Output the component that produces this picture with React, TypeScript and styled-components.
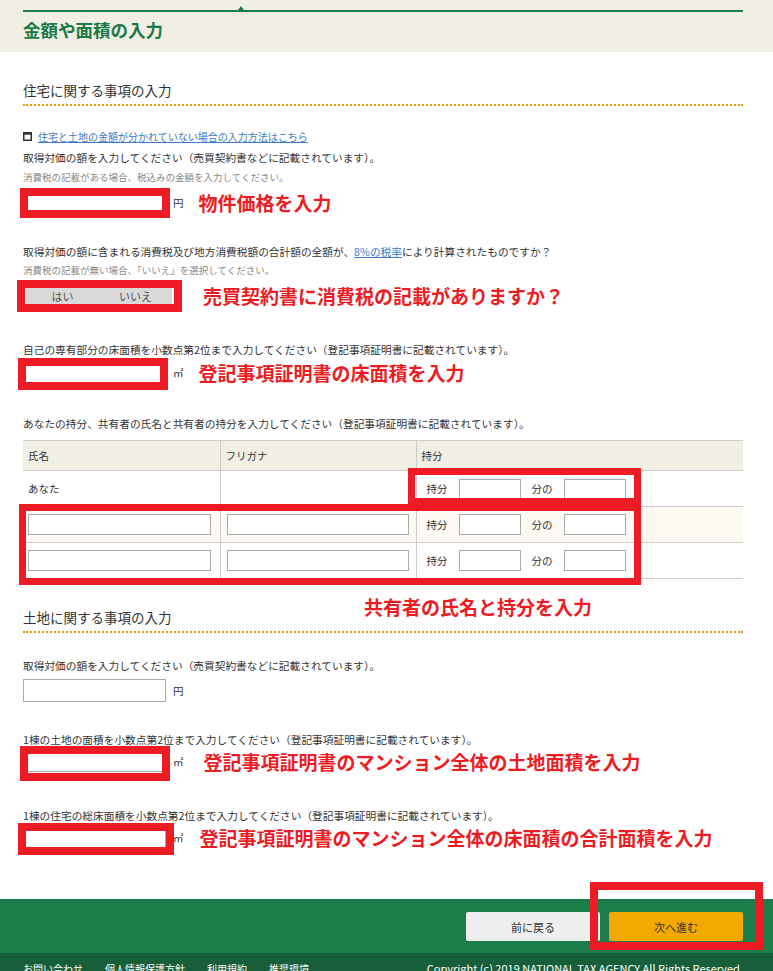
import React from 'react'
import styled, { createGlobalStyle } from 'styled-components'

const font = '"Noto Sans CJK JP", "Noto Sans", sans-serif'
const red = '#ed1c24'
const green = '#1b7d49'

const GlobalStyle = createGlobalStyle`
  body {
    margin: 0;
    background: #fff;
    font-family: ${font};
    color: #333;
  }
  * { box-sizing: border-box; }
`

const Header = styled.header`
  background: #f1eee3;
  height: 52px;
  padding: 10px 30px 0 23px;
`
const HeaderRule = styled.div`
  position: relative;
  height: 2px;
  background: ${green};
  &::before {
    content: '';
    position: absolute;
    left: 215px;
    top: -4px;
    border-left: 3px solid transparent;
    border-right: 3px solid transparent;
    border-bottom: 4px solid ${green};
  }
`
const PageTitle = styled.h1`
  margin: 5px 0 0;
  font-size: 17.5px;
  line-height: 26px;
  font-weight: 700;
  color: #1a7a47;
`

const Content = styled.main`
  padding: 0 30px 0 23px;
`
const SectionHeading = styled.h2<{ $mt: number }>`
  position: relative;
  margin: ${p => p.$mt}px 0 0;
  font-size: 13.5px;
  line-height: 20px;
  font-weight: 400;
  color: #333;
  padding-bottom: 4px;
  border-bottom: 2px dotted #e89a00;
`
const Line = styled.p<{ $mt: number }>`
  margin: ${p => p.$mt}px 0 0;
  font-size: 10.7px;
  line-height: 16px;
  color: #333;
  white-space: nowrap;
`
const SubNote = styled.p<{ $mt: number }>`
  margin: ${p => p.$mt}px 0 0;
  font-size: 9.5px;
  line-height: 14px;
  color: #888;
`
const GuideLink = styled.div<{ $mt: number }>`
  display: flex;
  align-items: center;
  gap: 6px;
  margin-top: ${p => p.$mt}px;
  height: 16px;
`
const Anchor = styled.a`
  color: #3b7bc8;
  text-decoration: underline;
  font-size: 10px;
  cursor: pointer;
`
const InlineAnchor = styled.a`
  color: #3b7bc8;
  text-decoration: underline;
`

const FieldRow = styled.div<{ $mt: number; $h?: number }>`
  position: relative;
  display: flex;
  align-items: center;
  margin-top: ${p => p.$mt}px;
  height: ${p => p.$h ?? 22}px;
`
const TextInput = styled.input<{ $w: number; $h?: number }>`
  width: ${p => p.$w}px;
  height: ${p => p.$h ?? 22}px;
  margin: 0;
  padding: 0 4px;
  border: 1px solid #aaa;
  background: #fff;
  font-family: ${font};
  font-size: 11px;
`
const Unit = styled.span`
  margin-left: 7px;
  font-size: 10.5px;
  color: #333;
`
const Callout = styled.span<{ $ml: number }>`
  margin-left: ${p => p.$ml}px;
  color: ${red};
  font-weight: 700;
  font-size: 19px;
  line-height: 1;
  white-space: nowrap;
`
const FloatingCallout = styled.span`
  position: absolute;
  left: 341px;
  top: -10px;
  color: ${red};
  font-weight: 700;
  font-size: 19px;
  line-height: 1;
  white-space: nowrap;
`
const Frame = styled.span<{ $x: number; $y: number; $w: number; $h: number; $b?: number }>`
  position: absolute;
  left: ${p => p.$x}px;
  top: ${p => p.$y}px;
  width: ${p => p.$w}px;
  height: ${p => p.$h}px;
  border: ${p => p.$b ?? 8}px solid ${red};
  pointer-events: none;
`

const Toggle = styled.div`
  display: flex;
  width: 146px;
  height: 17px;
  margin-left: 3px;
  background: #d9d9d9;
`
const ToggleOption = styled.button`
  flex: 1;
  border: 0;
  padding: 0;
  background: transparent;
  font-family: ${font};
  font-size: 11px;
  color: #555;
`

const TableWrap = styled.div`
  position: relative;
  margin-top: 8px;
`
const Table = styled.table`
  width: 720px;
  border-collapse: collapse;
  table-layout: fixed;
  border-top: 1px solid #ccc;
  font-size: 10.5px;
`
const Th = styled.th<{ $w?: number }>`
  width: ${p => (p.$w ? `${p.$w}px` : 'auto')};
  height: 30px;
  padding: 0 5px;
  background: #f1eee3;
  text-align: left;
  font-weight: 400;
  color: #333;
  border-bottom: 1px solid #ccc;
  border-left: 1px solid #ccc;
  &:first-child { border-left: 0; }
`
const Tr = styled.tr<{ $alt?: boolean }>`
  background: ${p => (p.$alt ? '#fcfaf3' : '#fff')};
`
const Td = styled.td`
  height: 36px;
  padding: 0 6px;
  color: #333;
  border-bottom: 1px solid #ccc;
  border-left: 1px solid #ccc;
  vertical-align: middle;
  &:first-child { border-left: 0; padding-left: 5px; }
`
const ShareBox = styled.div`
  display: flex;
  align-items: center;
  gap: 11px;
  padding-left: 4px;
`

const Footer = styled.footer`
  margin-top: 51px;
`
const ActionBar = styled.div`
  position: relative;
  display: flex;
  justify-content: flex-end;
  gap: 9px;
  height: 54px;
  padding: 13px 30px 0 0;
  background: #1b7e4a;
`
const NavButton = styled.button<{ $primary?: boolean }>`
  width: 134px;
  height: 29px;
  border: 0;
  border-radius: 2px;
  background: ${p => (p.$primary ? '#f3a900' : '#eeeeee')};
  color: #333;
  font-family: ${font};
  font-size: 11px;
`
const BottomBar = styled.div`
  display: flex;
  align-items: center;
  gap: 22px;
  height: 30px;
  padding: 0 30px 0 23px;
  background: #175f3a;
  color: #fff;
  font-size: 10px;
`
const BottomLink = styled.span`
  white-space: nowrap;
`
const Copyright = styled.span`
  margin-left: auto;
  font-size: 11px;
  white-space: nowrap;
`

const WindowIcon = () => (
  <svg width="9" height="9" viewBox="0 0 9 9">
    <rect x="0.75" y="0.75" width="7.5" height="7.5" fill="#fff" stroke="#333" strokeWidth="1.5" />
    <rect x="0.75" y="0.75" width="7.5" height="2" fill="#333" />
  </svg>
)

const coOwners = [0, 1]

const App: React.FC = () => (
  <>
    <GlobalStyle />
    <Header>
      <HeaderRule />
      <PageTitle>金額や面積の入力</PageTitle>
    </Header>

    <Content>
      <SectionHeading $mt={28}>住宅に関する事項の入力</SectionHeading>

      <GuideLink $mt={22}>
        <WindowIcon />
        <Anchor>住宅と土地の金額が分かれていない場合の入力方法はこちら</Anchor>
      </GuideLink>
      <Line $mt={6}>取得対価の額を入力してください（売買契約書などに記載されています）。</Line>
      <SubNote $mt={4}>消費税の記載がある場合、税込みの金額を入力してください。</SubNote>
      <FieldRow $mt={7}>
        <TextInput $w={143} />
        <Unit>円</Unit>
        <Callout $ml={15}>物件価格を入力</Callout>
        <Frame $x={-3} $y={-3} $w={150} $h={30} />
      </FieldRow>

      <Line $mt={31}>
        取得対価の額に含まれる消費税及び地方消費税額の合計額の全額が、<InlineAnchor>8%の税率</InlineAnchor>により計算されたものですか？
      </Line>
      <SubNote $mt={3}>消費税の記載が無い場合、「いいえ」を選択してください。</SubNote>
      <FieldRow $mt={10} $h={17}>
        <Toggle>
          <ToggleOption>はい</ToggleOption>
          <ToggleOption>いいえ</ToggleOption>
        </Toggle>
        <Callout $ml={31}>売買契約書に消費税の記載がありますか？</Callout>
        <Frame $x={-6} $y={-7} $w={165} $h={32} />
      </FieldRow>

      <Line $mt={38}>自己の専有部分の床面積を小数点第2位まで入力してください（登記事項証明書に記載されています）。</Line>
      <FieldRow $mt={3}>
        <TextInput $w={143} />
        <Unit>㎡</Unit>
        <Callout $ml={15}>登記事項証明書の床面積を入力</Callout>
        <Frame $x={-5} $y={-3} $w={150} $h={32} />
      </FieldRow>

      <Line $mt={33}>あなたの持分、共有者の氏名と共有者の持分を入力してください（登記事項証明書に記載されています）。</Line>
      <TableWrap>
        <Table>
          <thead>
            <tr>
              <Th $w={197}>氏名</Th>
              <Th $w={196}>フリガナ</Th>
              <Th>持分</Th>
            </tr>
          </thead>
          <tbody>
            <Tr>
              <Td>あなた</Td>
              <Td />
              <Td>
                <ShareBox>
                  持分 <TextInput $w={62} $h={20} /> 分の <TextInput $w={62} $h={20} />
                </ShareBox>
              </Td>
            </Tr>
            {coOwners.map(i => (
              <Tr key={i} $alt={i === 0}>
                <Td>
                  <TextInput $w={183} $h={21} />
                </Td>
                <Td>
                  <TextInput $w={182} $h={21} />
                </Td>
                <Td>
                  <ShareBox>
                    持分 <TextInput $w={62} $h={21} /> 分の <TextInput $w={62} $h={21} />
                  </ShareBox>
                </Td>
              </Tr>
            ))}
          </tbody>
        </Table>
        <Frame $x={385} $y={28} $w={233} $h={37} $b={7} />
        <Frame $x={-4} $y={64} $w={622} $h={81} $b={7} />
      </TableWrap>

      <SectionHeading $mt={28}>
        土地に関する事項の入力
        <FloatingCallout>共有者の氏名と持分を入力</FloatingCallout>
      </SectionHeading>

      <Line $mt={25}>取得対価の額を入力してください（売買契約書などに記載されています）。</Line>
      <FieldRow $mt={5} $h={23}>
        <TextInput $w={143} $h={23} />
        <Unit>円</Unit>
      </FieldRow>

      <Line $mt={30}>1棟の土地の面積を小数点第2位まで入力してください（登記事項証明書に記載されています）。</Line>
      <FieldRow $mt={2}>
        <TextInput $w={143} />
        <Unit>㎡</Unit>
        <Callout $ml={20}>登記事項証明書のマンション全体の土地面積を入力</Callout>
        <Frame $x={-3} $y={-4} $w={150} $h={35} />
      </FieldRow>

      <Line $mt={36}>1棟の住宅の総床面積を小数点第2位まで入力してください（登記事項証明書に記載されています）。</Line>
      <FieldRow $mt={2}>
        <TextInput $w={143} />
        <Unit>㎡</Unit>
        <Callout $ml={16}>登記事項証明書のマンション全体の床面積の合計面積を入力</Callout>
        <Frame $x={-5} $y={-3} $w={156} $h={32} />
      </FieldRow>
    </Content>

    <Footer>
      <ActionBar>
        <NavButton>前に戻る</NavButton>
        <NavButton $primary>次へ進む</NavButton>
        <Frame $x={590} $y={-17} $w={173} $h={68} />
      </ActionBar>
      <BottomBar>
        <BottomLink>お問い合わせ</BottomLink>
        <BottomLink>個人情報保護方針</BottomLink>
        <BottomLink>利用規約</BottomLink>
        <BottomLink>推奨環境</BottomLink>
        <Copyright>Copyright (c) 2019 NATIONAL TAX AGENCY All Rights Reserved.</Copyright>
      </BottomBar>
    </Footer>
  </>
)

export default App
